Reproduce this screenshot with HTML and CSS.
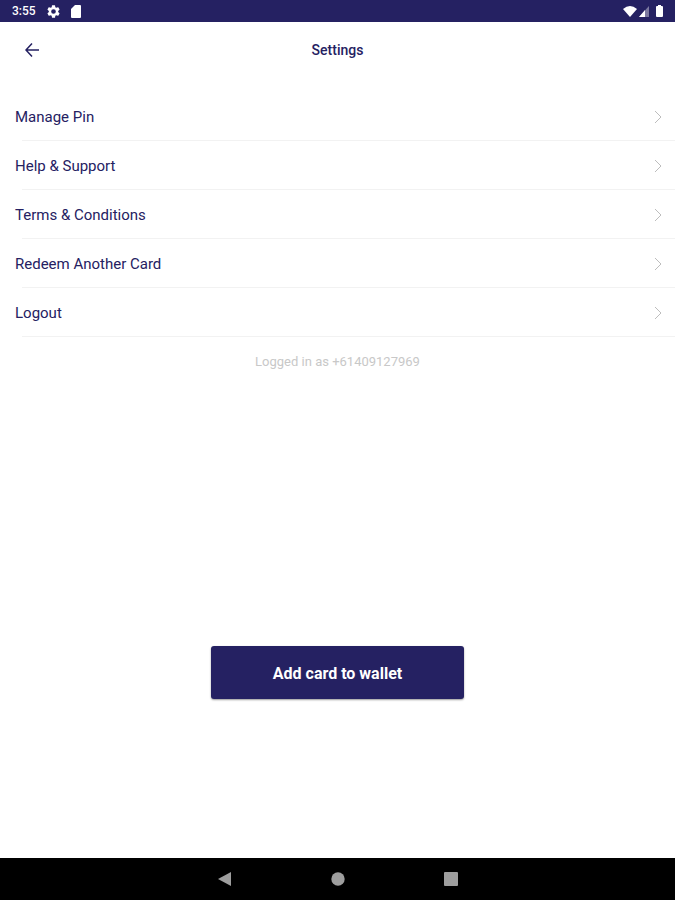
FILE: index.html
```html
<!DOCTYPE html>
<html lang="en">
<head>
  <meta charset="UTF-8">
  <meta name="viewport" content="width=device-width, initial-scale=1.0">
  <title>Settings</title>
  <link rel="stylesheet" href="styles.css">
</head>
<body>

<div class="status-bar">
  <div class="status-left">
    <span class="time">3:55</span>
    <svg width="13" height="13" viewBox="2 2 20 20" fill="#fff" aria-hidden="true"><path d="M19.14 12.94c.04-.3.06-.61.06-.94s-.02-.64-.07-.94l2.03-1.58a.49.49 0 0 0 .12-.61l-1.92-3.32a.49.49 0 0 0-.59-.22l-2.39.96a7 7 0 0 0-1.62-.94l-.36-2.54a.48.48 0 0 0-.48-.41h-3.84a.48.48 0 0 0-.47.41l-.36 2.54a7.3 7.3 0 0 0-1.62.94l-2.39-.96a.48.48 0 0 0-.59.22L2.74 8.87a.47.47 0 0 0 .12.61l2.03 1.58a6 6 0 0 0 0 1.88l-2.03 1.58a.49.49 0 0 0-.12.61l1.92 3.32c.12.22.37.29.59.22l2.39-.96c.5.38 1.03.7 1.62.94l.36 2.54c.05.24.24.41.48.41h3.84c.24 0 .44-.17.47-.41l.36-2.54a7 7 0 0 0 1.62-.94l2.39.96c.22.08.47 0 .59-.22l1.92-3.32a.47.47 0 0 0-.12-.61zM12 15.6a3.6 3.6 0 1 1 0-7.2 3.6 3.6 0 0 1 0 7.2z"/></svg>
    <svg width="10" height="13" viewBox="0 0 10 13" fill="#fff" aria-hidden="true"><path d="M4 0h5a1 1 0 0 1 1 1v11a1 1 0 0 1-1 1H1a1 1 0 0 1-1-1V4z"/></svg>
  </div>
  <div class="status-right">
    <svg width="14" height="11" viewBox="0 0 14 11" fill="#fff" aria-hidden="true"><path d="M0 3Q7-3 14 3L7 11z"/></svg>
    <svg width="10" height="11" viewBox="0 0 10 11" fill="#fff" aria-hidden="true"><path d="M10 0v11H0z" opacity=".4"/><path d="M6 4v7H0z"/></svg>
    <svg class="battery" width="7" height="12" viewBox="0 0 7 12" fill="#fff" aria-hidden="true"><path d="M2 0h3v1h1a1 1 0 0 1 1 1v9a1 1 0 0 1-1 1H1a1 1 0 0 1-1-1V2a1 1 0 0 1 1-1h1z"/></svg>
  </div>
</div>

<header class="header">
  <button class="back" type="button" aria-label="Back">
    <svg width="14" height="14" viewBox="0 0 14 14" fill="none" stroke="#252162" stroke-width="1.5" aria-hidden="true"><path d="M14 7H1M7 .5L1 7l6 6.5"/></svg>
  </button>
  <h1>Settings</h1>
</header>

<main class="content">
  <ul class="menu">
    <li><a href="#pin">Manage Pin <svg class="chevron" width="8" height="14" viewBox="0 0 8 14"><path d="M1 1l6 6-6 6"/></svg></a></li>
    <li><a href="#help">Help &amp; Support <svg class="chevron" width="8" height="14" viewBox="0 0 8 14"><path d="M1 1l6 6-6 6"/></svg></a></li>
    <li><a href="#terms">Terms &amp; Conditions <svg class="chevron" width="8" height="14" viewBox="0 0 8 14"><path d="M1 1l6 6-6 6"/></svg></a></li>
    <li><a href="#redeem">Redeem Another Card <svg class="chevron" width="8" height="14" viewBox="0 0 8 14"><path d="M1 1l6 6-6 6"/></svg></a></li>
    <li><a href="#logout">Logout <svg class="chevron" width="8" height="14" viewBox="0 0 8 14"><path d="M1 1l6 6-6 6"/></svg></a></li>
  </ul>
  <p class="account">Logged in as +61409127969</p>
  <button class="add-card" type="button">Add card to wallet</button>
</main>

<nav class="nav-bar">
  <button type="button" aria-label="Back"><svg width="14" height="14" viewBox="0 0 14 14" fill="#9e9e9e"><path d="M13 0v14L0 7z"/></svg></button>
  <button type="button" aria-label="Home"><svg width="14" height="14" viewBox="0 0 14 14" fill="#9e9e9e"><circle cx="7" cy="7" r="6.7"/></svg></button>
  <button type="button" aria-label="Recent apps"><svg width="14" height="14" viewBox="0 0 14 14" fill="#9e9e9e"><rect width="14" height="14" rx="1"/></svg></button>
</nav>

</body>
</html>
```
FILE: styles.css
```css
* {
  box-sizing: border-box;
}

body {
  font-family: Roboto, sans-serif;
  margin: 0;
  min-height: 100vh;
  display: flex;
  flex-direction: column;
  background: #fff;
  color: #252162;
}

button {
  font-family: inherit;
  border: none;
  padding: 0;
  cursor: pointer;
}

svg {
  display: block;
}

.status-bar {
  display: flex;
  justify-content: space-between;
  align-items: center;
  height: 22px;
  padding: 0 12px;
  background: #252162;
  color: #fff;
}

.status-left {
  display: flex;
  align-items: center;
  gap: 11px;
}

.status-right {
  display: flex;
  align-items: center;
  gap: 2px;
}

.battery {
  margin-left: 5px;
}

.time {
  font-size: 12px;
  font-weight: 500;
}

.header {
  display: grid;
  grid-template-columns: 64px 1fr 64px;
  align-items: center;
  height: 56px;
}

.back {
  display: flex;
  align-items: center;
  justify-content: center;
  height: 56px;
  background: none;
}

h1 {
  margin: 0;
  font-size: 14px;
  font-weight: 500;
  text-align: center;
}

.content {
  flex: 1;
  display: flex;
  flex-direction: column;
  align-items: center;
  padding: 14px 0 159px;
}

.menu {
  width: 100%;
  margin: 0;
  padding: 0;
  list-style: none;
}

.menu a {
  display: flex;
  align-items: center;
  justify-content: space-between;
  height: 48px;
  padding: 2px 13px 0 15px;
  color: inherit;
  font-size: 15px;
  text-decoration: none;
}

.menu li::after {
  content: "";
  display: block;
  height: 1px;
  margin-left: 22px;
  background: #f2f2f2;
}

.chevron {
  fill: none;
  stroke: #bdbdbd;
}

.account {
  margin: 16px 0;
  color: #c8c8c8;
  font-size: 13px;
  line-height: 18px;
}

.add-card {
  width: 253px;
  height: 53px;
  margin-top: auto;
  padding-top: 2px;
  border-radius: 3px;
  background: #252162;
  box-shadow: 0 1px 2px rgba(0, 0, 0, 0.4);
  color: #fff;
  font-size: 16px;
  font-weight: 700;
}

.nav-bar {
  display: flex;
  align-items: center;
  justify-content: center;
  gap: 65px;
  height: 42px;
  background: #000;
}

.nav-bar button {
  display: flex;
  align-items: center;
  justify-content: center;
  width: 48px;
  height: 42px;
  background: none;
}
```
